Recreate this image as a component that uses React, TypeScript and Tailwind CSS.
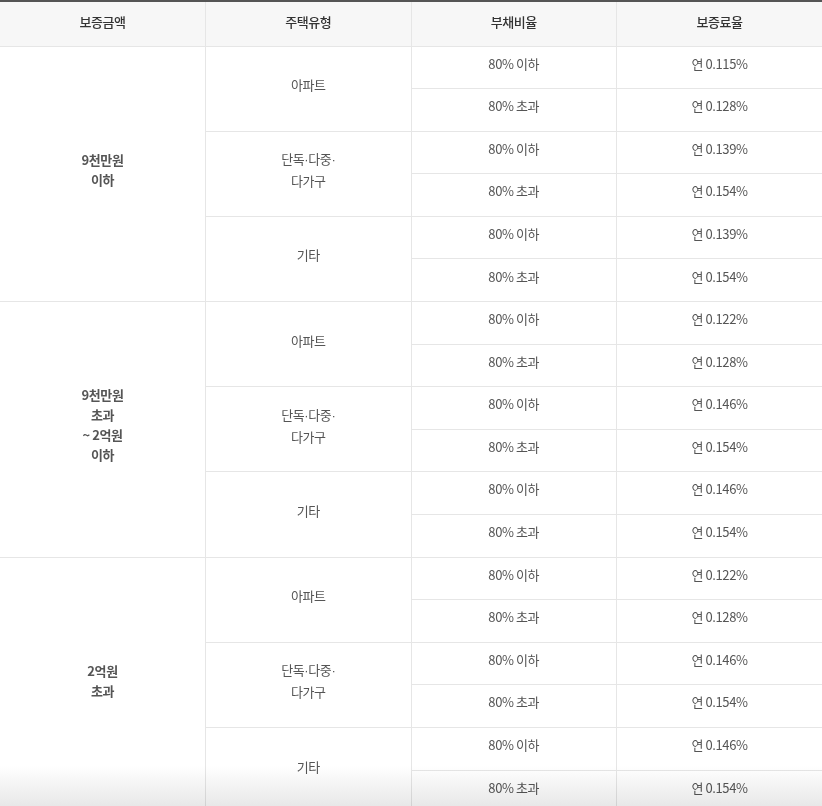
const groups = [
  { amount: ["9천만원", "이하"], rates: ["0.115", "0.128", "0.139", "0.154", "0.139", "0.154"] },
  { amount: ["9천만원", "초과", "~ 2억원", "이하"], rates: ["0.122", "0.128", "0.146", "0.154", "0.146", "0.154"] },
  { amount: ["2억원", "초과"], rates: ["0.122", "0.128", "0.146", "0.154", "0.146", "0.154"] },
];

const Dot = () => <span style={{ fontFamily: '"Liberation Sans", sans-serif' }}>·</span>;

const types = [
  [<>아파트</>],
  [<>단독<Dot />다중<Dot /></>, <>다가구</>],
  [<>기타</>],
];

const cell = "border border-[#e6e6e6] text-center align-middle pb-2 text-[13px] tracking-[-0.4px] text-[#555]";

export default function App() {
  return (
    <div className="relative h-[806px] w-[822px] overflow-hidden bg-white" style={{ fontFamily: '"Noto Sans CJK KR", "Noto Sans", sans-serif' }}>
      <table className="w-full table-fixed border-collapse border-t-2 border-t-[#555]">
        <thead>
          <tr className="h-[45px] bg-[#f7f7f7]">
            {["보증금액", "주택유형", "부채비율", "보증료율"].map((h) => (
              <th key={h} className="border border-[#e6e6e6] border-t-[#555] first:border-l-0 last:border-r-0 text-center align-middle pb-[4px] text-[13px] font-medium tracking-[-0.4px] text-[#333]">
                {h}
              </th>
            ))}
          </tr>
        </thead>
        <tbody>
          {groups.map((g, gi) =>
            g.rates.map((rate, ri) => (
              <tr key={`${gi}-${ri}`} className="h-[42.6px]">
                {ri === 0 && (
                  <td rowSpan={6} className={`${cell} border-l-0 font-bold text-[#444] leading-[20px]`}>
                    {g.amount.map((a) => (
                      <div key={a}>{a}</div>
                    ))}
                  </td>
                )}
                {ri % 2 === 0 && (
                  <td rowSpan={2} className={`${cell} leading-[21px]`}>
                    {types[ri / 2].map((t, ti) => (
                      <div key={ti}>{t}</div>
                    ))}
                  </td>
                )}
                <td className={cell}>{ri % 2 === 0 ? "80% 이하" : "80% 초과"}</td>
                <td className={`${cell} border-r-0`}>연&nbsp;{rate}%</td>
              </tr>
            ))
          )}
        </tbody>
      </table>
      <div className="pointer-events-none absolute bottom-0 left-0 h-[40px] w-full bg-gradient-to-b from-white to-[#e8e8e8] mix-blend-multiply" />
    </div>
  );
}
